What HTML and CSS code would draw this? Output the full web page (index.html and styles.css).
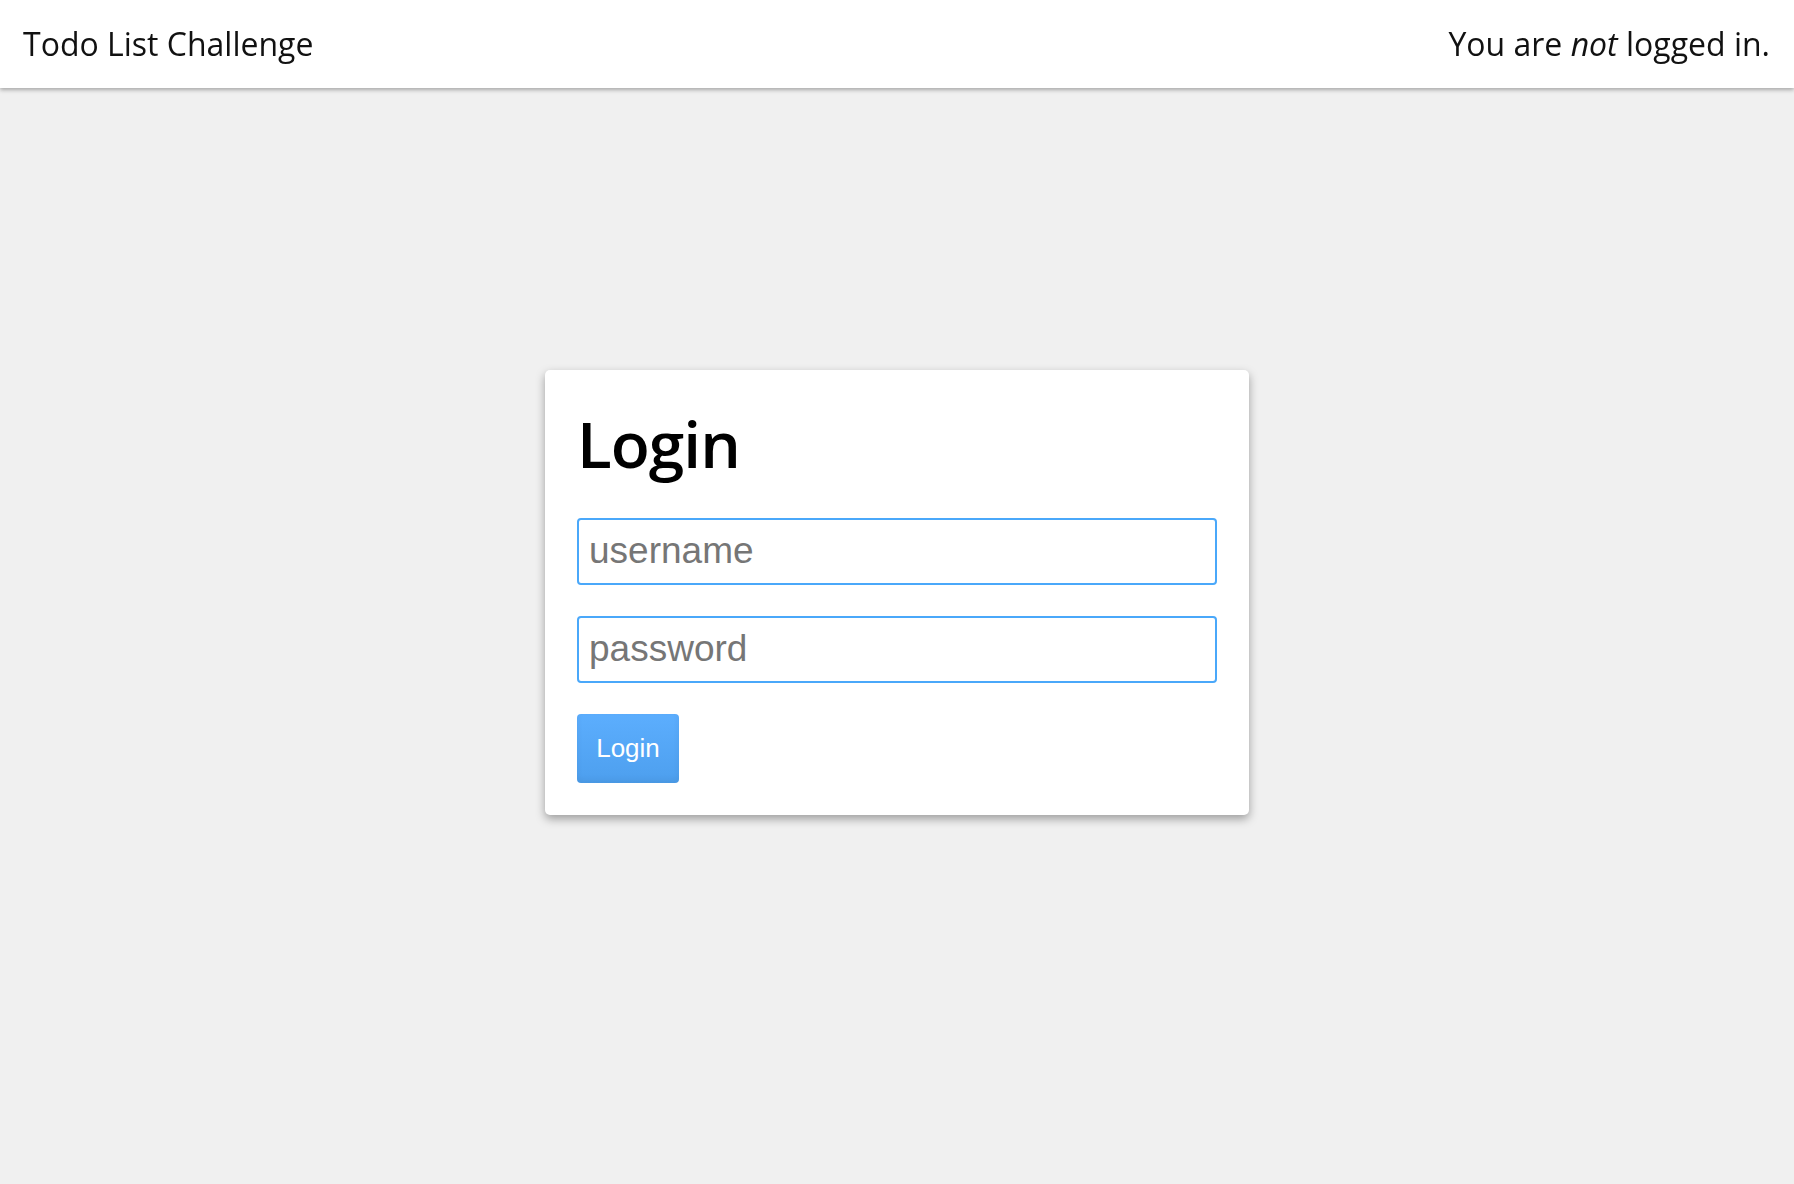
FILE: index.html
```html
<!DOCTYPE html>
<html lang="en">
<head>
<meta charset="utf-8">
<title>Todo List Challenge</title>
<link rel="stylesheet" href="styles.css">
</head>
<body>
<header class="topbar">
  <div class="brand">Todo List Challenge</div>
  <div class="status">You are <em>not</em> logged in.</div>
</header>
<main class="stage">
  <form class="card">
    <h1 class="card-title">Login</h1>
    <input class="field" type="text" placeholder="username">
    <input class="field" type="password" placeholder="password">
    <div class="actions">
      <button class="btn" type="button">Login</button>
    </div>
  </form>
</main>
</body>
</html>
```

FILE: styles.css
```css
html, body {
  margin: 0;
  padding: 0;
  height: 100%;
}
body {
  background: #f0f0f0;
  font-family: "Open Sans", "Liberation Sans", sans-serif;
  color: #111;
}
.topbar {
  position: fixed;
  top: 0;
  left: 0;
  right: 0;
  height: 88px;
  box-sizing: border-box;
  background: #fff;
  display: flex;
  align-items: center;
  justify-content: space-between;
  padding: 0 24px 0 23px;
  font-size: 32px;
  box-shadow: 0 2px 4px rgba(0, 0, 0, 0.3);
  z-index: 2;
}
.brand, .status {
  line-height: 1;
}
.stage {
  height: 100%;
  display: flex;
  align-items: center;
  justify-content: center;
}
.card {
  width: 704px;
  box-sizing: border-box;
  background: #fff;
  border-radius: 5px;
  padding: 32px;
  box-shadow: 0 4px 10px rgba(0, 0, 0, 0.35);
  display: flex;
  flex-direction: column;
}
.card-title {
  margin: 0 0 32px;
  font-family: "Open Sans", sans-serif;
  font-weight: 600;
  font-size: 64px;
  letter-spacing: -1px;
  line-height: 84px;
  color: #000;
}
.field {
  display: block;
  width: 100%;
  height: 67px;
  box-sizing: border-box;
  border: 2px solid #4aa8fa;
  border-radius: 4px;
  padding: 0 10px;
  margin: 0 0 31px;
  font-family: "Liberation Sans", Arial, sans-serif;
  font-size: 37px;
  color: #333;
  outline: none;
  background: #fff;
}
.field::placeholder {
  color: #767676;
}
.actions {
  display: flex;
}
.btn {
  width: 102px;
  height: 69px;
  border: none;
  border-radius: 4px;
  background: linear-gradient(#5caefe, #4d9fee);
  box-shadow: inset 0 -3px 6px rgba(0, 0, 0, 0.06);
  color: #fff;
  font-family: "Liberation Sans", Arial, sans-serif;
  font-size: 26px;
  padding: 0;
}
```
